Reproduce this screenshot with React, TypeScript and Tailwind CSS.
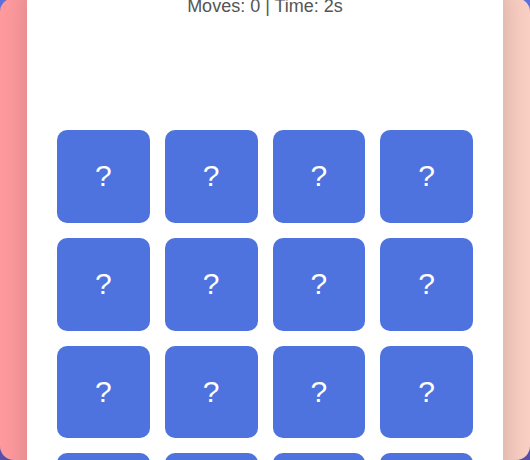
import React from "react";

const CARDS = Array.from({ length: 16 }, (_, i) => i);

export default function App() {
    return (
        <div
            className="w-[530px] h-[460px] overflow-hidden bg-gradient-to-b from-[#5f70dc] to-[#5650ac]"
            style={{ fontFamily: '"Liberation Sans", Arial, sans-serif' }}
        >
            {/* Warm pink panel */}
            <div className="flex flex-col h-[462px] -mt-[2px] rounded-[14px] bg-gradient-to-r from-[#ff9a9e] to-[#fad0c4] px-[27px]">
                {/* Game card */}
                <div className="-mt-[28px] h-[560px] shrink-0 bg-white rounded-[20px] shadow-[0_10px_30px_rgba(0,0,0,0.18)] px-[30px] pt-[24px]">
                    <div className="text-center text-[18px] leading-[24px] text-[#555]">
                        Moves: 0 | Time: 2s
                    </div>

                    <div className="mt-[112px] grid grid-cols-4 gap-[15px]">
                        {CARDS.map((i) => (
                            <button
                                key={i}
                                className="aspect-square rounded-[10px] bg-[#4e73df] flex items-center justify-center text-white text-[30px] leading-none"
                            >
                                ?
                            </button>
                        ))}
                    </div>
                </div>
            </div>
        </div>
    );
}
